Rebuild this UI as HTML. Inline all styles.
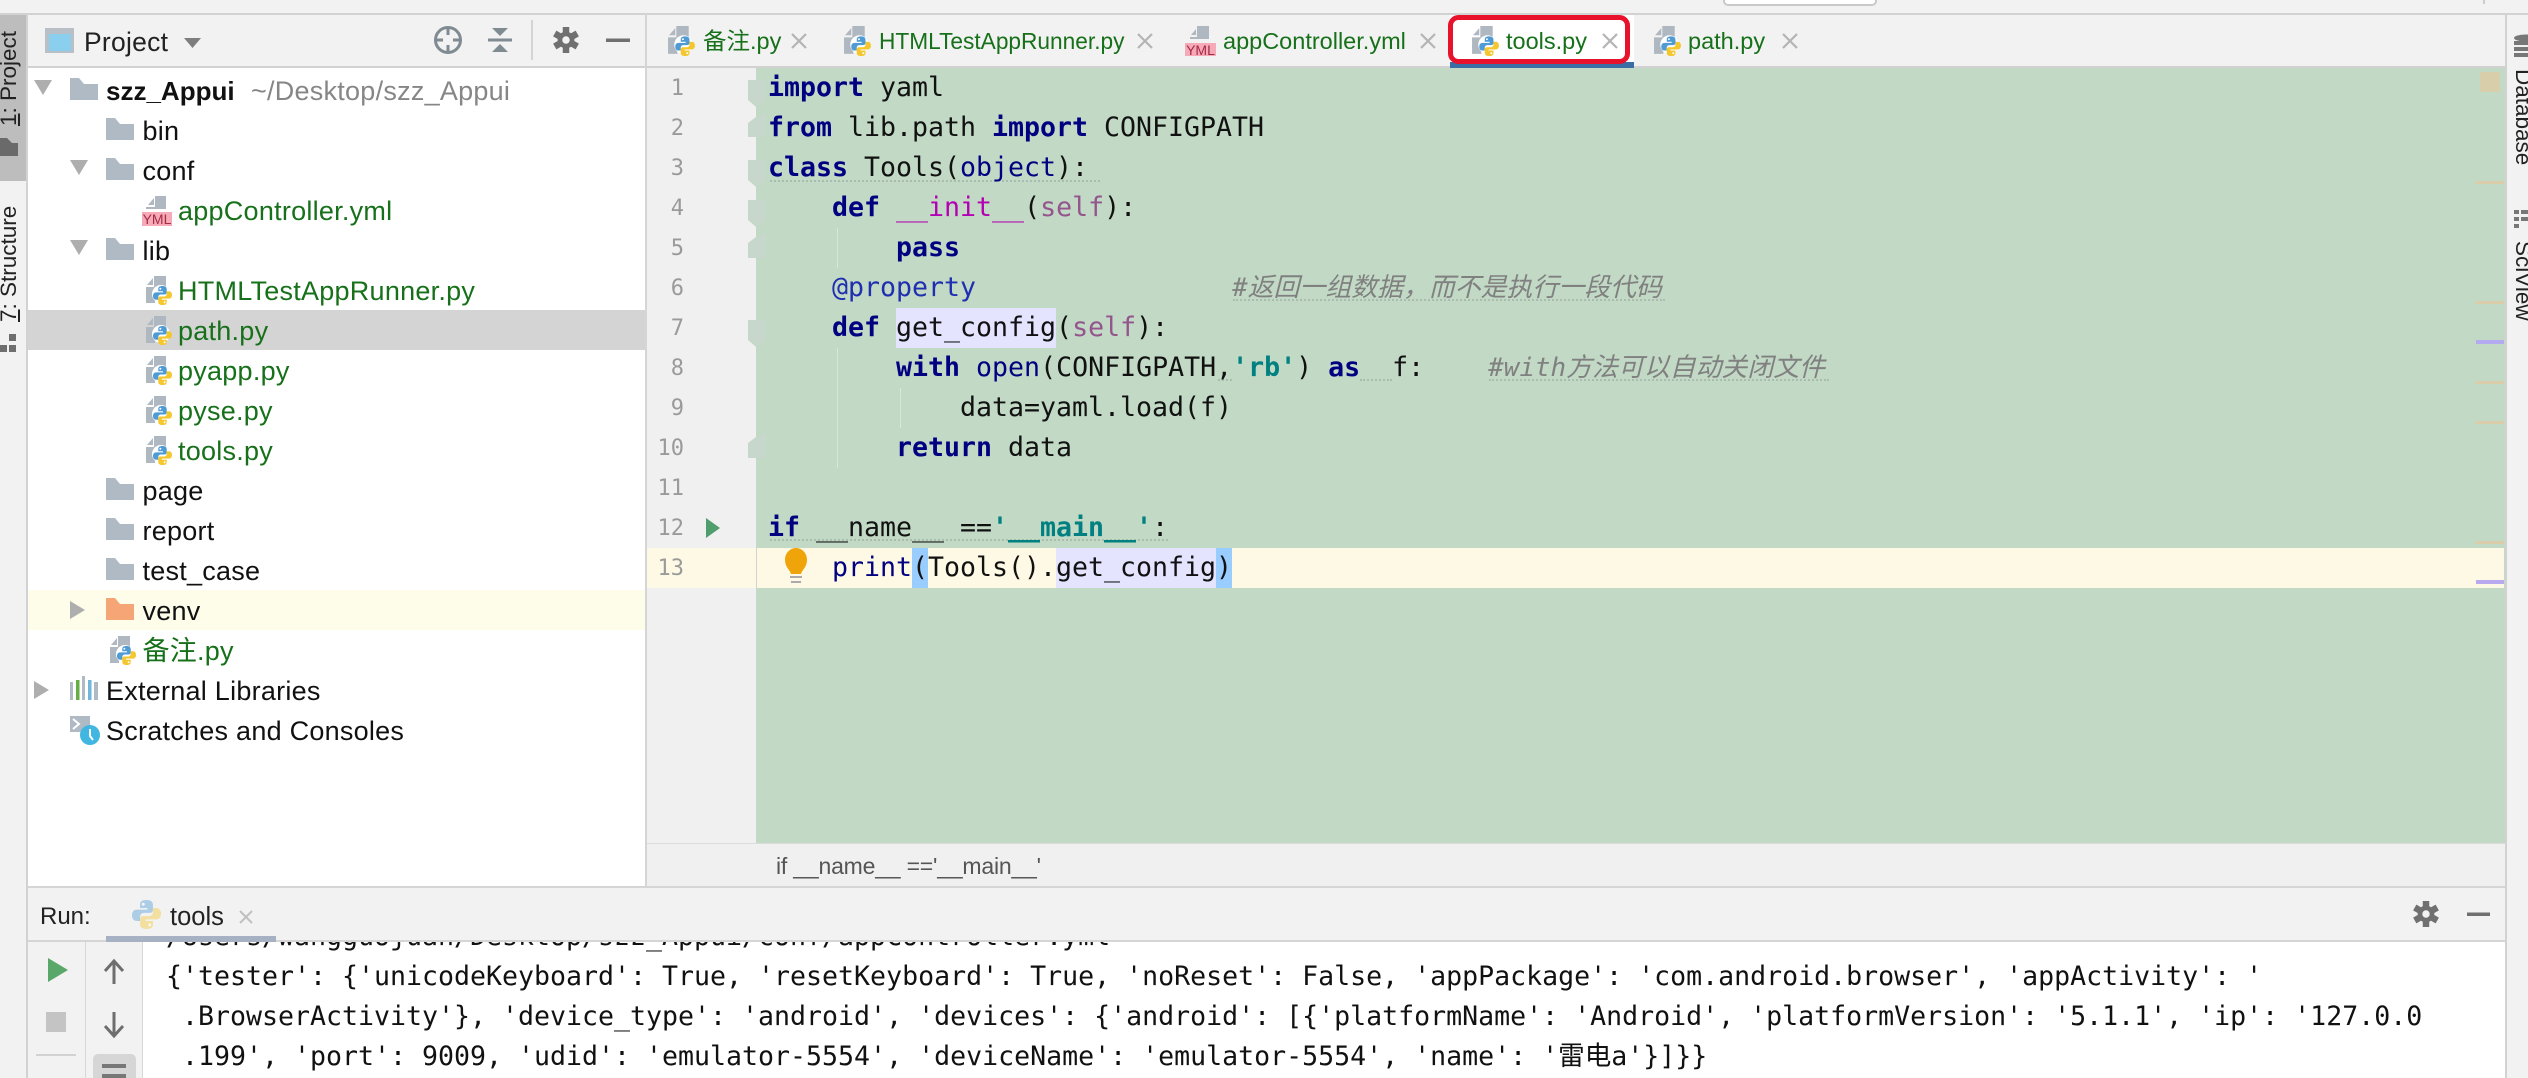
<!DOCTYPE html>
<html lang="zh"><head><meta charset="utf-8"><title>tools.py</title>
<style>
html,body{margin:0;padding:0;width:2528px;height:1078px;overflow:hidden;background:#f2f2f2}
body{position:relative;font-family:"Liberation Sans","Noto Sans CJK SC",sans-serif;color:#111}
.a,.t,.tab,.r{position:absolute;white-space:pre}
.t{font-size:27px;line-height:40px;height:40px;letter-spacing:.25px}
.g{color:#17701a}
.tab{font-size:23.5px;line-height:40px;top:21px;color:#17701a}
.r{font-size:22.5px;line-height:24px;height:24px;transform-origin:0 0;color:#222}
.code,.cons{position:absolute;margin:0;font-family:"DejaVu Sans Mono","Liberation Mono","Noto Sans CJK SC",monospace;font-size:26.58px;line-height:40px;color:#111;white-space:pre}
.k{color:#000080;font-weight:bold}.b{color:#000080}.s{color:#94558d}.m{color:#b200b2}.q{color:#008080;font-weight:bold}
.c{color:#808080;font-style:italic;font-size:25.9px;font-family:"DejaVu Sans Mono","Noto Sans CJK SC",monospace}
.d{color:#1f2fb0}
.ln{position:absolute;left:640px;width:44px;text-align:right;font-family:"DejaVu Sans Mono",monospace;font-size:22px;line-height:40px;color:#9a9a9a}
.w{position:absolute;height:0;border-top:2px dotted #a9bcae}
</style></head><body>
<!-- panels -->
<div class="a" style="left:1723px;top:-4px;width:150px;height:6px;background:#fff;border:2px solid #c9c9c9;border-radius:5px"></div>
<div class="a" style="left:2483px;top:0;width:2px;height:4px;background:#ccc"></div>
<div class="a" style="left:0;top:13px;width:2528px;height:2px;background:#d2d2d2"></div>
<div class="a" style="left:0;top:15px;width:26px;height:166px;background:#bdbdbd"></div>
<div class="a" style="left:26px;top:15px;width:2px;height:1063px;background:#d2d2d2"></div>
<div class="a" style="left:28px;top:66px;width:2477px;height:2px;background:#d2d2d2"></div>
<div class="a" style="left:28px;top:68px;width:617px;height:818px;background:#fff"></div>
<div class="a" style="left:28px;top:310px;width:617px;height:40px;background:#d4d4d4"></div>
<div class="a" style="left:28px;top:590px;width:617px;height:40px;background:#fdfde9"></div>
<div class="a" style="left:645px;top:15px;width:2px;height:871px;background:#d5d5d5"></div>
<div class="a" style="left:647px;top:68px;width:1858px;height:775px;background:#f0f0f0"></div>
<div class="a" style="left:756px;top:68px;width:1749px;height:775px;background:#c1d9c5"></div>
<div class="a" style="left:647px;top:548px;width:1857px;height:40px;background:#fef9e5"></div>
<div class="a" style="left:756px;top:548px;width:1px;height:40px;background:#d2d2d2"></div>
<div class="a" style="left:647px;top:843px;width:1858px;height:43px;background:#f0f0f0;border-top:1px solid #dcdcdc;box-sizing:border-box"></div>
<div class="a" style="left:2505px;top:15px;width:2px;height:1063px;background:#d2d2d2"></div>
<div class="a" style="left:28px;top:886px;width:2477px;height:2px;background:#d5d5d5"></div>
<div class="a" style="left:28px;top:888px;width:2477px;height:52px;background:#f2f2f2"></div>
<div class="a" style="left:28px;top:940px;width:2477px;height:2px;background:#d5d5d5"></div>
<div class="a" style="left:143px;top:942px;width:2362px;height:136px;background:#fff"></div>
<div class="a" style="left:85px;top:942px;width:1px;height:136px;background:#d8d8d8"></div>
<div class="a" style="left:142px;top:942px;width:1px;height:136px;background:#d8d8d8"></div>
<!-- highlights -->
<div class="a" style="left:896px;top:308px;width:160px;height:40px;background:#e4e4ff"></div>
<div class="a" style="left:1056px;top:548px;width:160px;height:40px;background:#e4e4ff"></div>
<div class="a" style="left:912px;top:548px;width:16px;height:40px;background:#99ccff"></div>
<div class="a" style="left:1216px;top:548px;width:16px;height:40px;background:#99ccff"></div>
<div class="a" style="left:837px;top:228px;width:1px;height:40px;background:#d9e6dc"></div>
<div class="a" style="left:837px;top:348px;width:1px;height:120px;background:#d9e6dc"></div>
<div class="a" style="left:900px;top:388px;width:1px;height:40px;background:#d9e6dc"></div>
<!-- weak-warning dotted marks -->
<div class="w" style="left:770px;top:180px;width:330px"></div>
<div class="w" style="left:1233px;top:299px;width:432px"></div>
<div class="w" style="left:1218px;top:379px;width:14px"></div>
<div class="w" style="left:1360px;top:379px;width:32px"></div>
<div class="w" style="left:1489px;top:379px;width:340px"></div>
<div class="w" style="left:770px;top:539px;width:398px"></div>
<!-- red & tab -->
<div class="a" style="left:1450px;top:15px;width:184px;height:48px;background:#fff"></div>
<div class="a" style="left:1450px;top:62px;width:184px;height:6px;background:#3c6ea6"></div>
<!-- markers -->
<div class="a" style="left:2480px;top:72px;width:20px;height:20px;background:#d8ceaa"></div>
<div class="a" style="left:2476px;top:181px;width:28px;height:3px;background:#dccdaa"></div>
<div class="a" style="left:2476px;top:301px;width:28px;height:3px;background:#dccdaa"></div>
<div class="a" style="left:2476px;top:340px;width:28px;height:4px;background:#b4aaf0"></div>
<div class="a" style="left:2476px;top:381px;width:28px;height:3px;background:#dccdaa"></div>
<div class="a" style="left:2476px;top:421px;width:28px;height:3px;background:#dccdaa"></div>
<div class="a" style="left:2476px;top:541px;width:28px;height:3px;background:#dccdaa"></div>
<div class="a" style="left:2476px;top:580px;width:28px;height:4px;background:#b9a9ee"></div>

<svg class="a" style="left:0;top:0" width="2528" height="1078" viewBox="0 0 2528 1078">
<defs>
<symbol id="logo" viewBox="0 0 18 18" overflow="visible">
<path d="M9 0C6 0 5 1 5 3V5H9.5V6H3C1 6 0 7.5 0 9.5S1 13 3 13H5V10.5C5 9 6 8 7.5 8H11C12.5 8 13 7 13 6V3C13 1 11.5 0 9 0Z" fill="#4f9bd6"/>
<path transform="rotate(180 9 9)" d="M9 0C6 0 5 1 5 3V5H9.5V6H3C1 6 0 7.5 0 9.5S1 13 3 13H5V10.5C5 9 6 8 7.5 8H11C12.5 8 13 7 13 6V3C13 1 11.5 0 9 0Z" fill="#f5c72e"/>
<circle cx="7" cy="2.6" r=".9" fill="#fff"/><circle cx="11" cy="15.4" r=".9" fill="#fff"/>
</symbol>
<symbol id="py" viewBox="0 0 27 29" overflow="visible">
<path d="M8 0H20V11H8Z M1 9L7 2V9Z M0 11H9V27H0Z" fill="#afb8c1"/>
<circle cx="15" cy="18" r="9" fill="#fff"/>
<use href="#logo" x="7" y="10" width="19" height="19"/>
</symbol>
<symbol id="yml" viewBox="0 0 30 30" overflow="visible">
<path d="M13 0H24V13H4V11H13Z M6 9L12 2V9Z" fill="#afb8c1"/>
<rect x="0" y="16" width="30" height="14" fill="#f6aab8"/>
</symbol>
<symbol id="fd" viewBox="0 0 28 22"><path d="M0 0H9L14 6H28V22H0Z" fill="#afbac4"/></symbol>
<symbol id="fo" viewBox="0 0 28 22"><path d="M0 0H9L14 6H28V22H0Z" fill="#f6a676"/></symbol>
<symbol id="ad" viewBox="0 0 18 15"><path d="M0 0H18L9 15Z" fill="#aeaeae"/></symbol>
<symbol id="ar" viewBox="0 0 15 18"><path d="M0 0L15 9L0 18Z" fill="#aeaeae"/></symbol>
<symbol id="gear" viewBox="-14 -14 28 28"><g fill="#707070"><circle r="9"/><rect x="-3.5" y="-14" width="7" height="28"/><rect x="-3.5" y="-14" width="7" height="28" transform="rotate(60)"/><rect x="-3.5" y="-14" width="7" height="28" transform="rotate(120)"/></g><circle r="4" fill="#f2f2f2"/></symbol>
</defs>
<!-- header icons -->
<rect x="45" y="28" width="29" height="25" fill="#b8bfc6"/><rect x="49" y="34" width="22" height="17" fill="#8ad0ee"/>
<path d="M184 38H201L192.500 48Z" fill="#7e7e7e"/>
<g stroke="#7f8b91" stroke-width="3" fill="none"><circle cx="448" cy="40" r="12.500"/><path d="M448 27V35M448 45V53M435 40H443M453 40H461"/></g>
<path d="M492 28H508L500 36Z M492 52H508L500 44Z" fill="#7f8b91"/><rect x="488" y="38.500" width="24" height="3" fill="#7f8b91"/>
<rect x="531" y="20" width="2" height="40" fill="#d4d4d4"/>
<use href="#gear" x="553" y="27" width="26" height="26"/>
<rect x="606" y="38.500" width="24" height="3.500" fill="#707070"/>
<!-- left strip icons -->
<path d="M0 138H7L12 143H18V156H0Z" fill="#6a6a6a"/>
<g fill="#6e6e6e"><rect x="9" y="334" width="7" height="7"/><rect x="0" y="345" width="7" height="7"/><rect x="9" y="345" width="7" height="7"/></g>
<!-- right strip icons -->
<g fill="#777"><ellipse cx="2526" cy="38" rx="12" ry="3.500"/><path d="M2514 41H2528V45H2514Z M2514 47H2528V51H2514Z M2514 53H2528V57H2514Z"/><rect x="2514" y="210" width="5" height="4"/><rect x="2514" y="217" width="5" height="4"/><rect x="2514" y="224" width="5" height="4"/><rect x="2521" y="210" width="7" height="4"/><rect x="2521" y="217" width="7" height="4"/></g>
<!-- tree -->
<use href="#ad" x="34" y="80" width="18" height="15"/><use href="#fd" x="70" y="78" width="28" height="22"/>
<use href="#fd" x="106" y="118" width="28" height="22"/>
<use href="#ad" x="70" y="160" width="18" height="15"/><use href="#fd" x="106" y="158" width="28" height="22"/>
<use href="#yml" x="142" y="196" width="30" height="30"/>
<use href="#ad" x="70" y="240" width="18" height="15"/><use href="#fd" x="106" y="238" width="28" height="22"/>
<use href="#py" x="146" y="276" width="27" height="29"/>
<use href="#py" x="146" y="316" width="27" height="29"/>
<use href="#py" x="146" y="356" width="27" height="29"/>
<use href="#py" x="146" y="396" width="27" height="29"/>
<use href="#py" x="146" y="436" width="27" height="29"/>
<use href="#fd" x="106" y="478" width="28" height="22"/>
<use href="#fd" x="106" y="518" width="28" height="22"/>
<use href="#fd" x="106" y="558" width="28" height="22"/>
<use href="#ar" x="70" y="601" width="15" height="18"/><use href="#fo" x="106" y="598" width="28" height="22"/>
<use href="#py" x="110" y="636" width="27" height="29"/>
<use href="#ar" x="34" y="681" width="15" height="18"/>
<g><rect x="70" y="682" width="3" height="18" fill="#afbac4"/><rect x="76" y="680" width="3.500" height="20" fill="#66ad44"/><rect x="82" y="676" width="3" height="24" fill="#afbac4"/><rect x="88" y="680" width="3.500" height="20" fill="#6fb6dc"/><rect x="94" y="682" width="4" height="18" fill="#afbac4"/></g>
<rect x="70" y="716" width="20" height="16" fill="#afbac4"/><path d="M73 719L79 724L73 729" stroke="#fff" stroke-width="2" fill="none"/>
<circle cx="90" cy="735" r="10" fill="#40b6e0"/><path d="M90 729V736L93 740" stroke="#fff" stroke-width="2" fill="none"/>
<!-- tabs -->
<use href="#py" x="668" y="26" width="28" height="30"/>
<use href="#py" x="844" y="26" width="28" height="30"/>
<path d="M1197 26H1209V39H1190V37H1197Z M1191 35L1196 29V35Z" fill="#afb8c1"/><rect x="1185" y="43" width="31" height="13" fill="#f6aab8"/>
<use href="#py" x="1472" y="26" width="28" height="30"/>
<use href="#py" x="1654" y="26" width="28" height="30"/>
<g stroke="#b4b4b4" stroke-width="2.200" fill="none"><path d="M792 34L806 48M806 34L792 48"/><path d="M1138 34L1152 48M1152 34L1138 48"/><path d="M1421 34L1435 48M1435 34L1421 48"/><path d="M1603 34L1617 48M1617 34L1603 48"/><path d="M1783 34L1797 48M1797 34L1783 48"/></g>
<rect x="1450.500" y="17.500" width="177" height="44" rx="8" fill="none" stroke="#e9122c" stroke-width="5"/>
<!-- fold marks -->
<g fill="#c7d7cb">
<path d="M748 80H766V100L756 107L748 100Z"/>
<path d="M756 117L766 113V137H748V123Z"/>
<path d="M748 160H766V180L756 187L748 180Z"/>
<path d="M748 200H766V220L756 227L748 220Z"/>
<path d="M756 237L766 233V258H748V243Z"/>
<path d="M748 320H766V340L756 347L748 340Z"/>
<path d="M756 437L766 433V458H748V443Z"/>
</g>
<!-- gutter icons -->
<path d="M706 518L720 528L706 538Z" fill="#4f9e6d"/>
<path d="M796 548C790 548 785 553 785 560C785 567 790 570 791 574H801C802 570 807 567 807 560C807 553 802 548 796 548Z" fill="#efa50a"/><rect x="790" y="576" width="12" height="2" fill="#aaa"/><rect x="791" y="581" width="10" height="2" fill="#aaa"/>
<!-- run icons -->
<use href="#logo" x="132" y="900" width="29" height="29" opacity=".42"/>
<g stroke="#c0c0c0" stroke-width="2" fill="none"><path d="M240 911L252 923M252 911L240 923"/></g>
<rect x="106" y="936" width="170" height="6" fill="#a7b1c4"/>
<use href="#gear" x="2413" y="901" width="26" height="26"/>
<rect x="2467" y="912.500" width="23" height="3.500" fill="#707070"/>
<path d="M48 958L68 970L48 982Z" fill="#59a869"/>
<rect x="46" y="1012" width="20" height="20" fill="#c4c4c4"/>
<g stroke="#6e6e6e" stroke-width="3" fill="none"><path d="M114 962V984M105 971L114 961L123 971"/><path d="M114 1012V1035M105 1026L114 1036L123 1026"/></g>
<rect x="36" y="1054" width="40" height="2" fill="#d2d2d2"/>
<rect x="93" y="1054" width="43" height="30" rx="5" fill="#d6d6d6"/><rect x="102" y="1064" width="24" height="4" fill="#777"/><rect x="102" y="1074" width="24" height="4" fill="#777"/>
</svg>

<!-- side labels -->
<div class="r" style="left:-3px;top:126px;transform:rotate(-90deg)"><span style="text-decoration:underline">1</span>: Project</div>
<div class="r" style="left:-3px;top:322px;transform:rotate(-90deg)"><span style="text-decoration:underline">7</span>: Structure</div>
<div class="r" style="left:2535px;top:69px;transform:rotate(90deg)">Database</div>
<div class="r" style="left:2535px;top:241px;transform:rotate(90deg)">SciView</div>
<!-- project header -->
<div class="t" style="left:84px;top:22px;font-size:26.5px;color:#222">Project</div>
<!-- tree text -->
<div class="t" style="left:106px;top:71px;font-size:26px;letter-spacing:0"><b>szz_Appui</b></div>
<div class="t" style="left:251px;top:71px;color:#868686">~/Desktop/szz_Appui</div>
<div class="t" style="left:142.500px;top:111px">bin</div>
<div class="t" style="left:142.500px;top:151px">conf</div>
<div class="t g" style="left:178px;top:191px">appController.yml</div>
<div class="a" style="left:142px;top:212px;width:30px;text-align:center;font-size:14px;line-height:15px;color:#a52a45">YML</div>
<div class="t" style="left:142.500px;top:231px">lib</div>
<div class="t g" style="left:178px;top:271px">HTMLTestAppRunner.py</div>
<div class="t g" style="left:178px;top:311px">path.py</div>
<div class="t g" style="left:178px;top:351px">pyapp.py</div>
<div class="t g" style="left:178px;top:391px">pyse.py</div>
<div class="t g" style="left:178px;top:431px">tools.py</div>
<div class="t" style="left:142.500px;top:471px">page</div>
<div class="t" style="left:142.500px;top:511px">report</div>
<div class="t" style="left:142.500px;top:551px">test_case</div>
<div class="t" style="left:142.500px;top:591px">venv</div>
<div class="t g" style="left:142.500px;top:631px">备注.py</div>
<div class="t" style="left:106px;top:671px">External Libraries</div>
<div class="t" style="left:106px;top:711px">Scratches and Consoles</div>
<!-- tabs text -->
<div class="tab" style="left:703px">备注.py</div>
<div class="tab" style="left:879px;font-size:22.7px">HTMLTestAppRunner.py</div>
<div class="tab" style="left:1223px">appController.yml</div>
<div class="a" style="left:1185px;top:43px;width:31px;text-align:center;font-size:14px;line-height:14px;color:#a52a45">YML</div>
<div class="tab" style="left:1506px">tools.py</div>
<div class="tab" style="left:1688px">path.py</div>
<!-- line numbers -->
<div class="ln" style="top:69px">1</div><div class="ln" style="top:109px">2</div><div class="ln" style="top:149px">3</div><div class="ln" style="top:189px">4</div><div class="ln" style="top:229px">5</div><div class="ln" style="top:269px">6</div><div class="ln" style="top:309px">7</div><div class="ln" style="top:349px">8</div><div class="ln" style="top:389px">9</div><div class="ln" style="top:429px">10</div><div class="ln" style="top:469px">11</div><div class="ln" style="top:509px">12</div><div class="ln" style="top:549px">13</div>
<!-- code -->
<pre class="code" style="left:768px;top:68px"><span class="k">import</span> yaml
<span class="k">from</span> lib.path <span class="k">import</span> CONFIGPATH
<span class="k">class</span> Tools(<span class="b">object</span>):
    <span class="k">def</span> <span class="m">__init__</span>(<span class="s">self</span>):
        <span class="k">pass</span>
    <span class="d">@property</span>                <span class="c">#返回一组数据，而不是执行一段代码</span>
    <span class="k">def</span> get_config(<span class="s">self</span>):
        <span class="k">with</span> <span class="b">open</span>(CONFIGPATH,<span class="q">'rb'</span>) <span class="k">as</span>  f:    <span class="c">#with方法可以自动关闭文件</span>
            data=yaml.load(f)
        <span class="k">return</span> data

<span class="k">if</span> __name__ ==<span class="q">'__main__'</span>:
    <span class="b">print</span>(Tools().get_config)</pre>
<!-- breadcrumb -->
<div class="t" style="left:776px;top:846px;font-size:23px;letter-spacing:-.2px;color:#555">if __name__ =='__main__'</div>
<!-- run -->
<div class="t" style="left:40px;top:897px;font-size:24px;letter-spacing:0;color:#222">Run:</div>
<div class="t" style="left:170px;top:897px;font-size:25.500px;letter-spacing:0;color:#222">tools</div>
<div class="a" style="left:143px;top:942px;width:2362px;height:136px;overflow:hidden">
<pre class="cons" style="left:23px;top:-25px">/Users/wangguojuan/Desktop/szz_Appui/conf/appController.yml
{'tester': {'unicodeKeyboard': True, 'resetKeyboard': True, 'noReset': False, 'appPackage': 'com.android.browser', 'appActivity': '
 .BrowserActivity'}, 'device_type': 'android', 'devices': {'android': [{'platformName': 'Android', 'platformVersion': '5.1.1', 'ip': '127.0.0
 .199', 'port': 9009, 'udid': 'emulator-5554', 'deviceName': 'emulator-5554', 'name': '雷电a'}]}}</pre>
</div>
<div class="a" style="left:106px;top:936px;width:170px;height:6px;background:#a7b1c4"></div>
</body></html>
